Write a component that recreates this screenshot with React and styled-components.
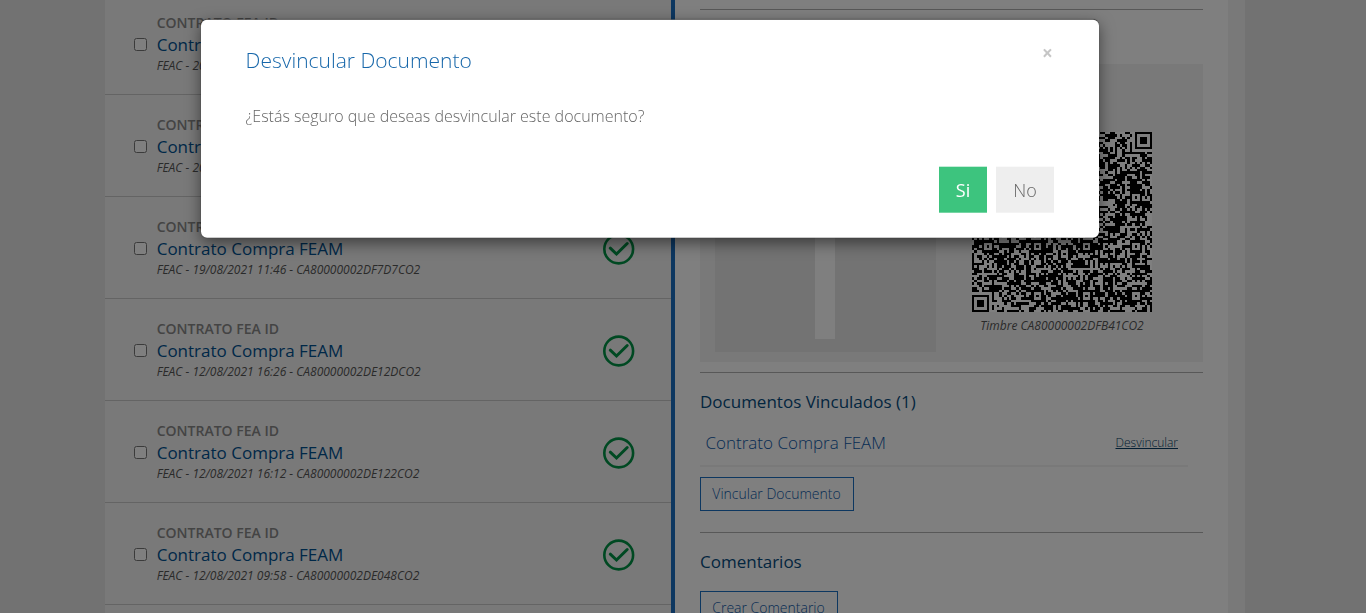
import React from 'react';
import styled, { createGlobalStyle } from 'styled-components';

const GlobalStyle = createGlobalStyle`
  *, *::before, *::after { box-sizing: border-box; }
  html, body { margin: 0; padding: 0; overflow: hidden; background: #e4e4e4; }
  body, button, input { font-family: 'Open Sans', 'Liberation Sans', sans-serif; }
`;

const Page = styled.div`
  height: 613px;
  overflow: hidden;
  background: #e4e4e4;
  padding: 0 121px 0 105px;
`;

const Container = styled.main`
  display: flex;
  height: 613px;
  overflow: hidden;
  background: #f2f2f2;
  padding-right: 17px;
`;

const List = styled.ul`
  flex: 0 0 566px;
  margin: -7px 0 0;
  padding: 0;
  list-style: none;
`;

const Row = styled.li`
  display: flex;
  height: 102px;
  border-bottom: 1px solid #c9c9c9;
  padding: 20px 36.4px 0 29px;
`;

const Check = styled.input`
  flex: none;
  width: 13px;
  height: 13px;
  margin: 25px 9.7px 0 0;
`;

const RowText = styled.div`
  flex: 1;
  white-space: nowrap;
`;

const Kind = styled.div`
  font-size: 14px;
  line-height: 20px;
  font-weight: 600;
  color: #888;
`;

const Name = styled.div`
  font-size: 17px;
  line-height: 24px;
  color: #005191;
`;

const Meta = styled.div`
  font-size: 12px;
  line-height: 17px;
  font-style: italic;
  color: #555;
`;

const Status = styled.svg`
  flex: none;
  width: 32px;
  height: 32px;
  margin-top: 16px;
`;

const Detail = styled.section`
  flex: 1;
  background: #fff;
  border-left: 4px solid #1b6fc0;
  padding: 9px 25px 0;
`;

const Rule = styled.hr`
  height: 1px;
  border: 0;
  margin: 0;
  background: #b0b0b0;
`;

const Card = styled.div`
  display: flex;
  justify-content: space-between;
  height: 298px;
  margin: 54px 0 10px;
  padding: 10px 51px 10px 15px;
  background: #f2f2f2;
`;

const Preview = styled.div`
  width: 221px;
  padding: 13px 101px 13px 100px;
  background: #e6e6e6;
  display: flex;
`;

const PreviewBar = styled.div`
  flex: 1;
  background: #fff;
`;

const Stamp = styled.figure`
  margin: 58px 0 0;
  width: 180px;
  text-align: center;
  white-space: nowrap;
`;

const QrImage = styled.svg`
  display: block;
  width: 180px;
  height: 180px;
  background: #fff;
`;

const StampText = styled.figcaption`
  font-size: 12px;
  line-height: 17px;
  margin-top: 5px;
  font-style: italic;
  color: #555;
`;

const Heading = styled.h3`
  margin: 17px 0 0;
  font-size: 17px;
  line-height: 24px;
  font-weight: 400;
  color: #064c80;
`;

const Linked = styled.div`
  display: flex;
  align-items: center;
  justify-content: space-between;
  width: 488px;
  height: 53px;
  padding: 4px 10px 0 5.5px;
  border-bottom: 2px solid #f2f2f2;
`;

const LinkedName = styled.span`
  font-size: 17px;
  line-height: 25px;
  padding-top: 1px;
  font-weight: 300;
  color: #0d58a8;
`;

const Unlink = styled.a`
  padding-top: 2px;
  font-size: 12px;
  font-weight: 300;
  text-decoration: underline;
  color: #063d66;
`;

const Outline = styled.button`
  display: block;
  width: ${(p) => p.$width}px;
  height: 34px;
  margin: ${(p) => p.$space};
  padding: 0 1px 2px 0;
  border: 1px solid #1b6fc0;
  background: transparent;
  font-size: 14px;
  font-weight: 300;
  color: #0d58a8;
`;

const Backdrop = styled.div`
  position: absolute;
  inset: 0;
  background: rgba(0, 0, 0, 0.5);
`;

const Dialog = styled.div`
  position: absolute;
  top: 20px;
  left: 201px;
  width: 898px;
  height: 218px;
  padding: 24px 45px 25px 44.6px;
  display: flex;
  flex-direction: column;
  background: #fff;
  border-radius: 6px;
  box-shadow: 0 5px 15px rgba(0, 0, 0, 0.5), 0 0 1px rgba(0, 0, 0, 0.5);
  transform: translateY(-0.3px);
  will-change: transform;
`;

const DialogHead = styled.header`
  display: flex;
  justify-content: space-between;
  height: 34px;
`;

const Title = styled.h2`
  margin: 0;
  font-size: 21px;
  line-height: 33px;
  font-weight: 300;
  color: #1767aa;
`;

const Close = styled.button`
  border: 0;
  padding: 0;
  width: 13px;
  height: 19px;
  background: none;
  font-size: 19px;
  line-height: 19px;
  font-weight: 700;
  color: #c6c6c6;
`;

const Message = styled.p`
  margin: 26px 0 0;
  font-size: 16px;
  line-height: 24px;
  font-weight: 300;
  color: #666;
`;

const Actions = styled.footer`
  display: flex;
  justify-content: flex-end;
  gap: 9px;
  margin-top: auto;
`;

const Action = styled.button`
  width: ${(p) => (p.$primary ? 48 : 58)}px;
  height: 46px;
  border: 0;
  padding: 0;
  font-size: 18px;
  font-weight: ${(p) => (p.$primary ? 400 : 300)};
  color: ${(p) => (p.$primary ? '#fff' : '#666')};
  background: ${(p) => (p.$primary ? '#3dc47e' : '#eee')};
`;

const documents = [
  'FEAC - 20/08/2021 10:12 - CA80000002DFB41CO2',
  'FEAC - 20/08/2021 09:35 - CA80000002DFA02CO2',
  'FEAC - 19/08/2021 11:46 - CA80000002DF7D7CO2',
  'FEAC - 12/08/2021 16:26 - CA80000002DE12DCO2',
  'FEAC - 12/08/2021 16:12 - CA80000002DE122CO2',
  'FEAC - 12/08/2021 09:58 - CA80000002DE048CO2',
];

// Version 14 QR grid: 73 modules with alignment marks centred on 6, 26, 46, 66.
const SIZE = 73;
const MARKS = [6, 26, 46, 66];

function buildQrPath() {
  let seed = 20210819;
  const random = () => {
    seed = (Math.imul(seed, 1664525) + 1013904223) >>> 0;
    return seed / 4294967296;
  };
  const grid = Array.from({ length: SIZE }, () =>
    Array.from({ length: SIZE }, () => random() < 0.55)
  );
  const square = (cx, cy, radius, dark) => {
    for (let y = -radius; y <= radius; y += 1) {
      for (let x = -radius; x <= radius; x += 1) {
        const row = grid[cy + y];
        if (row && cx + x >= 0 && cx + x < SIZE) {
          row[cx + x] = dark(Math.max(Math.abs(x), Math.abs(y)));
        }
      }
    }
  };
  for (let i = 8; i < SIZE - 8; i += 1) {
    grid[6][i] = i % 2 === 0;
    grid[i][6] = i % 2 === 0;
  }
  MARKS.forEach((cy) =>
    MARKS.forEach((cx) => square(cx, cy, 2, (d) => d !== 1))
  );
  [[3, 3], [69, 3], [3, 69]].forEach(([cx, cy]) =>
    square(cx, cy, 4, (d) => d < 2 || d === 3)
  );
  let path = '';
  grid.forEach((row, y) =>
    row.forEach((dark, x) => {
      if (dark) path += `M${x} ${y}h1v1h-1z`;
    })
  );
  return path;
}

const qrPath = buildQrPath();

function DocumentRow({ meta }) {
  return (
    <Row>
      <Check type="checkbox" />
      <RowText>
        <Kind>CONTRATO FEA ID</Kind>
        <Name>Contrato Compra FEAM</Name>
        <Meta>{meta}</Meta>
      </RowText>
      <Status viewBox="0 0 32 32" fill="none" stroke="#009245">
        <circle cx="15.7" cy="16" r="14.4" strokeWidth="2.6" />
        <path d="M7.3 15.2 13.5 21 24.2 10.5" strokeWidth="3" strokeLinecap="round" />
      </Status>
    </Row>
  );
}

export default function App() {
  return (
    <>
      <GlobalStyle />
      <Page>
        <Container>
          <List>
            {documents.map((meta) => (
              <DocumentRow key={meta} meta={meta} />
            ))}
          </List>
          <Detail>
            <Rule />
            <Card>
              <Preview>
                <PreviewBar />
              </Preview>
              <Stamp>
                <QrImage viewBox="0 0 73 73" shapeRendering="crispEdges">
                  <path d={qrPath} fill="#000" />
                </QrImage>
                <StampText>Timbre CA80000002DFB41CO2</StampText>
              </Stamp>
            </Card>
            <Rule />
            <Heading>Documentos Vinculados (1)</Heading>
            <Linked>
              <LinkedName>Contrato Compra FEAM</LinkedName>
              <Unlink>Desvincular</Unlink>
            </Linked>
            <Outline $width={154} $space="10px 0 21px">Vincular Documento</Outline>
            <Rule />
            <Heading>Comentarios</Heading>
            <Outline $width={138} $space="17px 0 0">Crear Comentario</Outline>
          </Detail>
        </Container>
      </Page>
      <Backdrop />
      <Dialog role="dialog">
        <DialogHead>
          <Title>Desvincular Documento</Title>
          <Close aria-label="Cerrar">×</Close>
        </DialogHead>
        <Message>¿Estás seguro que deseas desvincular este documento?</Message>
        <Actions>
          <Action $primary>Si</Action>
          <Action>No</Action>
        </Actions>
      </Dialog>
    </>
  );
}
